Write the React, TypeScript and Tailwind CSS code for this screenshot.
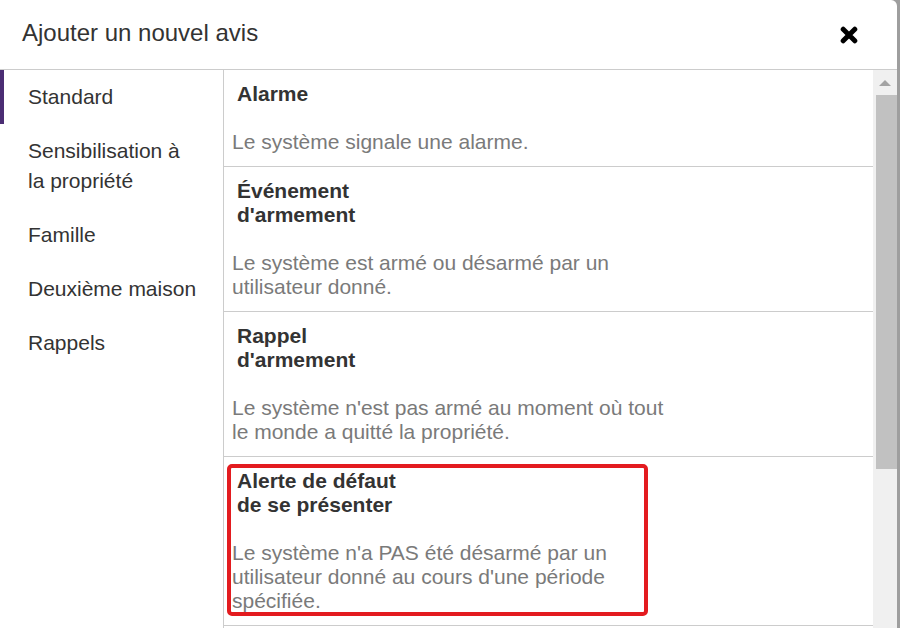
import React from "react";

const items = [
  { title: ["Alarme"], desc: "Le système signale une alarme." },
  { title: ["Événement", "d'armement"], desc: "Le système est armé ou désarmé par un utilisateur donné." },
  { title: ["Rappel", "d'armement"], desc: "Le système n'est pas armé au moment où tout le monde a quitté la propriété." },
  { title: ["Alerte de défaut", "de se présenter"], desc: "Le système n'a PAS été désarmé par un utilisateur donné au cours d'une période spécifiée.", highlight: true },
];

const side = ["Standard", "Sensibilisation à la propriété", "Famille", "Deuxième maison", "Rappels"];

export default function App() {
  return (
    <div className="w-[900px] h-[628px] overflow-hidden bg-[#9e9e9e] flex" style={{ fontFamily: '"Liberation Sans", Arial, sans-serif' }}>
      <div className="w-[897px] h-full bg-white rounded-tr-[6px] flex flex-col">
        <div className="h-[69px] shrink-0 flex items-center justify-between pl-[22px] pr-[39px] border-b border-[#cccccc] box-content">
          <div className="text-[24px] text-[#333333] leading-none pb-[3px]">Ajouter un nouvel avis</div>
          <svg width="18" height="18" viewBox="0 0 18 18" className="mt-[1px]">
            <path d="M3.2 3.2 L14.8 14.8 M14.8 3.2 L3.2 14.8" stroke="#000" strokeWidth="5" strokeLinecap="round" />
          </svg>
        </div>
        <div className="flex flex-1 min-h-0">
          <div className="w-[223px] shrink-0 border-r border-[#cccccc] box-content">
            {side.map((s, i) => (
              <div
                key={s}
                className={`border-l-4 pl-[24px] pr-[25px] py-[12px] text-[21px] leading-[30px] text-[#333333] ${i === 0 ? "border-[#4b2d73]" : "border-transparent"}`}
              >
                {s}
              </div>
            ))}
          </div>
          <div className="flex-1 min-w-0 overflow-hidden">
            {items.map((it, i) => (
              <div key={i} className="relative border-b border-[#cccccc] pt-[12px] pb-[12px]">
                <div className="pl-[13px] max-w-[200px] text-[21px] leading-[24px] font-bold text-[#333333]">
                  {it.title.map((t) => (
                    <div key={t}>{t}</div>
                  ))}
                </div>
                <div className="pl-[8px] mt-[24px] max-w-[455px] text-[21px] leading-[24px] text-[#7a7a7a]">{it.desc}</div>
                {it.highlight && (
                  <div className="absolute left-[3px] top-[7px] w-[421px] h-[152px] border-4 border-[#e31b1f] rounded-[5px]" />
                )}
              </div>
            ))}
          </div>
          <div className="w-[24px] shrink-0 bg-[#f0f0f0] flex flex-col items-center">
            <div className="mt-[10px] w-0 h-0 border-l-[6px] border-r-[6px] border-b-[6px] border-l-transparent border-r-transparent border-b-[#a3a3a3]" />
            <div className="mt-[9px] ml-[2px] w-[21px] h-[374px] bg-[#c1c1c1]" />
          </div>
        </div>
      </div>
    </div>
  );
}
